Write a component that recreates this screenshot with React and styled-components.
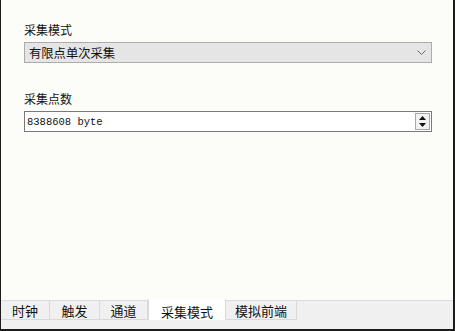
import React from "react";
import styled, { createGlobalStyle } from "styled-components";

const Global = createGlobalStyle`
  html, body { margin: 0; padding: 0; background: #fcfdf8; }
  #root { width: 455px; height: 331px; }
  * { box-sizing: border-box; }
`;

const Frame = styled.div`
  width: 455px;
  height: 331px;
  display: flex;
  flex-direction: column;
  background: #fcfdf8;
  border-left: 1px solid #1c1c1c;
  border-right: 2px solid #1c1c1c;
  border-bottom: 2px solid #1c1c1c;
  font-family: "Noto Sans CJK SC", "Noto Sans", sans-serif;
  color: #111;
`;

const Content = styled.div`
  flex: 1;
  padding: 21px 21px 0 23px;
  display: flex;
  flex-direction: column;
  gap: 27px;
`;

const Field = styled.div`
  display: flex;
  flex-direction: column;
  gap: 4px;
`;

const Label = styled.div`
  font-size: 12px;
  line-height: 17px;
  height: 17px;
`;

const Combo = styled.div`
  height: 21px;
  border: 1px solid #acacac;
  background: #e5e5e5;
  display: flex;
  align-items: center;
  justify-content: space-between;
  padding: 0 5px 0 4px;
  font-size: 12.3px;
`;

const Spin = styled.div`
  height: 21px;
  border: 1px solid #7a7a7a;
  background: #ffffff;
  display: flex;
  align-items: center;
  justify-content: space-between;
  padding: 0 1px 0 2px;
  font-family: "Liberation Mono", "DejaVu Sans Mono", monospace;
  font-size: 10.5px;
`;

const SpinButtons = styled.div`
  width: 15px;
  height: 17px;
  border: 1px solid #a8a8a8;
  background: #f2f2f2;
  display: flex;
  flex-direction: column;
  align-items: center;
  justify-content: space-evenly;
`;

const TabArea = styled.div`
  height: 29px;
  background: #f0f0f0;
  border-top: 1px solid #dcdcdc;
  display: flex;
  align-items: flex-start;
`;

const Tab = styled.div`
  width: ${(p) => p.$w}px;
  height: ${(p) => (p.$active ? "21px" : "19px")};
  margin-top: ${(p) => (p.$active ? "-2px" : "0")};
  display: flex;
  align-items: center;
  justify-content: center;
  font-size: 13px;
  background: ${(p) => (p.$active ? "#ffffff" : "#f0f0f0")};
  border-right: 1px solid #d9d9d9;
  border-bottom: ${(p) => (p.$active ? "none" : "1px solid #d9d9d9")};
  border-left: ${(p) => (p.$active ? "1px solid #d9d9d9" : "none")};
  padding-top: ${(p) => (p.$active ? "3px" : "0")};
`;

const tabs = [
  { t: "时钟", w: 49 },
  { t: "触发", w: 50 },
  { t: "通道", w: 48 },
  { t: "采集模式", w: 78, active: true },
  { t: "模拟前端", w: 71 },
];

export default function App() {
  return (
    <>
      <Global />
      <Frame>
        <Content>
          <Field>
            <Label>采集模式</Label>
            <Combo>
              <span>有限点单次采集</span>
              <svg width="9" height="6" viewBox="0 0 9 6">
                <path d="M0.5 0.5 L4.5 4.5 L8.5 0.5" fill="none" stroke="#6b6b6b" strokeWidth="1" />
              </svg>
            </Combo>
          </Field>
          <Field>
            <Label>采集点数</Label>
            <Spin>
              <span>8388608 byte</span>
              <SpinButtons>
                <svg width="7" height="4" viewBox="0 0 7 4">
                  <path d="M0 4 L3.5 0 L7 4 Z" fill="#111" />
                </svg>
                <svg width="7" height="4" viewBox="0 0 7 4">
                  <path d="M0 0 L3.5 4 L7 0 Z" fill="#111" />
                </svg>
              </SpinButtons>
            </Spin>
          </Field>
        </Content>
        <TabArea>
          {tabs.map((x) => (
            <Tab key={x.t} $active={x.active} $w={x.w}>
              {x.t}
            </Tab>
          ))}
        </TabArea>
      </Frame>
    </>
  );
}
